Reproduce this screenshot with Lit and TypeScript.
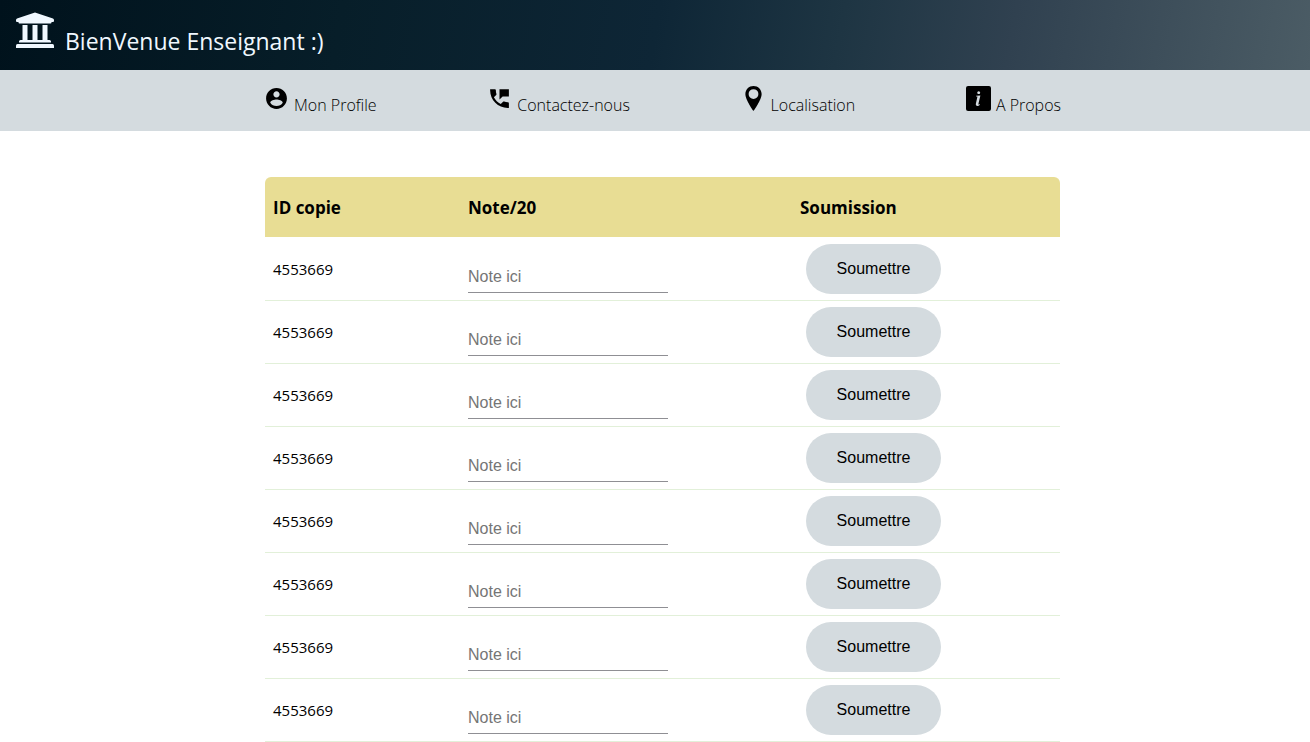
import { LitElement, html, css, svg } from "lit";
import { customElement, state } from "lit/decorators.js";

const profileIcon = svg`<path d="M12 2C6.48 2 2 6.48 2 12s4.48 10 10 10 10-4.48 10-10S17.52 2 12 2zm0 3c1.66 0 3 1.34 3 3s-1.34 3-3 3-3-1.34-3-3 1.34-3 3-3zm0 14.2c-2.5 0-4.71-1.28-6-3.22.03-1.99 4-3.08 6-3.08 1.99 0 5.97 1.09 6 3.08-1.29 1.94-3.5 3.22-6 3.22z"/>`;
const phoneIcon = svg`<path d="M20 15.5c-1.25 0-2.45-.2-3.57-.57-.35-.11-.74-.03-1.02.24l-2.2 2.2c-2.83-1.44-5.15-3.75-6.59-6.58l2.2-2.21c.28-.27.36-.66.25-1.01C8.7 6.45 8.5 5.25 8.5 4c0-.55-.45-1-1-1H3v1c0 9.39 7.61 17 17 17h1v-4.5c0-.55-.45-1-1-1zM12 3v10l3-3h6V3h-9z"/>`;
const pinIcon = svg`<path fill-rule="evenodd" d="M12 0C7.6 0 4.2 3.4 4.2 7.7 4.2 13.4 12 24 12 24s7.8-10.6 7.8-16.300C19.8 3.4 16.4 0 12 0zm0 3a4.7 4.7 0 1 1 0 9.400A4.7 4.7 0 0 1 12 3z"/>`;
const infoIcon = svg`<path fill-rule="evenodd" d="M2 0h20a2 2 0 0 1 2 2v20a2 2 0 0 1-2 2H2a2 2 0 0 1-2-2V2a2 2 0 0 1 2-2zm10.2 5a1.4 1.4 0 1 0 .01 0zM9.7 9.3v.8h1.3l-1.5 6.7c-.4 1.7.3 2.3 1.5 2.3 1 0 1.8-.4 2.3-1.400l-.4-.4c-.5.6-1.2.7-1 0l1.9-8.200z"/>`;

@customElement("app-root")
export class AppRoot extends LitElement {
  static styles = css`
    :host {
      display: block;
      color: #000;
      background: #fff;
      font-family: "Segoe UI", "Open Sans", sans-serif;
      font-size: 15px;
    }
    .banner {
      display: flex;
      align-items: flex-start;
      box-sizing: border-box;
      height: 70px;
      padding: 12px 16px 0;
      gap: 11px;
      color: aliceblue;
      background: linear-gradient(
        100deg,
        #00121c 0%,
        #071e29 26%,
        #0e2636 50%,
        #1e3543 64%,
        #304150 77%,
        #4b5c65 100%
      );
    }
    .logo {
      width: 38px;
      height: 37px;
      fill: currentColor;
    }
    .title {
      margin: 12px 0 0;
      font-size: 23px;
      font-weight: 400;
      line-height: 34px;
    }
    .menu {
      display: flex;
      flex-wrap: wrap;
      justify-content: space-between;
      padding: 16px 249px 16px 264px;
      background: #d4dbdf;
    }
    .link {
      display: flex;
      gap: 5px;
      color: inherit;
      font-size: 16px;
      font-weight: 300;
      line-height: 20px;
      text-decoration: none;
    }
    .link span {
      padding-top: 9px;
    }
    .icon {
      width: 25px;
      height: 25px;
      fill: currentColor;
    }
    .content {
      padding: 46px 250px 0 265px;
    }
    .grades {
      width: 100%;
      table-layout: fixed;
      border-collapse: collapse;
      text-align: left;
    }
    .head {
      box-sizing: border-box;
      height: 60px;
      padding: 0 8px;
      background: #e8dd94;
      font-size: 17px;
      font-weight: 700;
    }
    .id {
      width: 195px;
    }
    .note {
      width: 332px;
    }
    .head:first-child {
      border-top-left-radius: 6px;
    }
    .head:last-child {
      border-top-right-radius: 6px;
    }
    .cell {
      height: 62px;
      padding: 0 8px;
      border-bottom: 1px solid #e2f0d9;
    }
    tr:first-child > .cell {
      padding-top: 1px;
    }
    .field {
      display: block;
      box-sizing: border-box;
      width: 200px;
      max-width: 100%;
      height: 32px;
      margin-top: 16px;
      padding: 0;
      border: 0;
      border-bottom: 1px solid #8f8f94;
      border-radius: 0;
      outline: 0;
      background: transparent;
      font: 16px "Liberation Sans", Arial, sans-serif;
    }
    .field::placeholder {
      color: #757575;
    }
    .submit {
      display: block;
      width: 135px;
      height: 50px;
      margin-left: 6px;
      padding: 0;
      border: 0;
      border-radius: 25px;
      color: #000;
      background: #d4dbdf;
      font: 16px "Liberation Sans", Arial, sans-serif;
      cursor: pointer;
    }
    @media (max-width: 1000px) {
      .menu,
      .content {
        padding-right: 16px;
        padding-left: 16px;
      }
      .id {
        width: 25%;
      }
      .note {
        width: 40%;
      }
    }
  `;

  @state() private copies = Array.from({ length: 8 }, () => "4553669");

  private links = [
    { label: "Mon Profile", icon: profileIcon },
    { label: "Contactez-nous", icon: phoneIcon },
    { label: "Localisation", icon: pinIcon },
    { label: "A Propos", icon: infoIcon },
  ];

  render() {
    return html`
      <header class="banner">
        <svg class="logo" viewBox="0 0 38 37" aria-hidden="true">
          <path d="M19 .5 37 6.5q1 .5 1 1.500v1q0 1-1 1h-1.500v.5q0 1-1 1h-31q-1 0-1-1V10H1Q0 10 0 9V8q0-1 1-1.500z" />
          <path d="M6.500 13h5v15h5V13h5v15h5V13h5v15h2q1.500 0 1.500 1.500v1h-32v-1Q3 28 4.500 28h2z" />
          <path d="M1.500 32h35q1.500 0 1.500 1.500V36H0v-2.500Q0 32 1.500 32z" />
        </svg>
        <h1 class="title">BienVenue Enseignant :)</h1>
      </header>
      <nav class="menu">
        ${this.links.map(
          (link) => html`<a class="link" href="#">
            <svg class="icon" viewBox="0 0 24 24" aria-hidden="true">${link.icon}</svg>
            <span>${link.label}</span>
          </a>`
        )}
      </nav>
      <main class="content">
        <table class="grades">
          <thead>
            <tr>
              <th class="head id" scope="col">ID copie</th>
              <th class="head note" scope="col">Note/20</th>
              <th class="head" scope="col">Soumission</th>
            </tr>
          </thead>
          <tbody>
            ${this.copies.map(
              (copy) => html`<tr>
                <td class="cell">${copy}</td>
                <td class="cell">
                  <input class="field" type="text" placeholder="Note ici" aria-label="Note de la copie ${copy}" />
                </td>
                <td class="cell"><button class="submit" type="button">Soumettre</button></td>
              </tr>`
            )}
          </tbody>
        </table>
      </main>
    `;
  }
}
